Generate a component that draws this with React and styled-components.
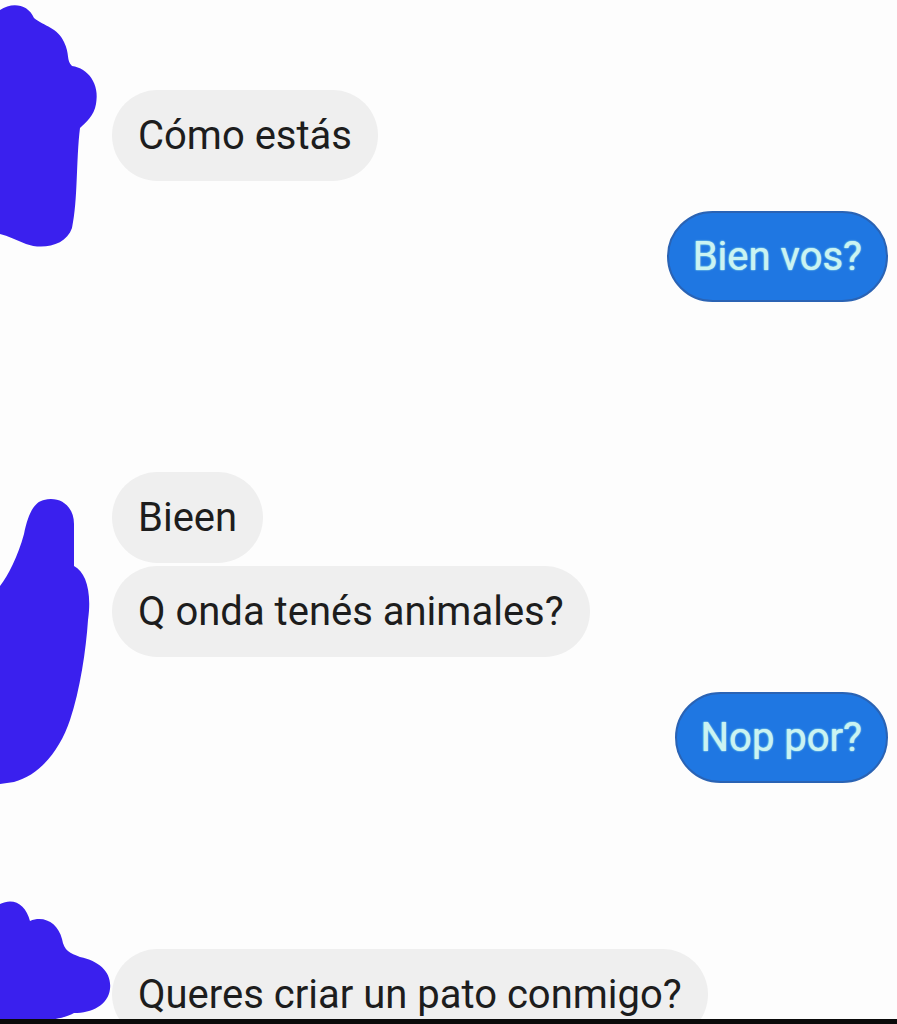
import React from "react";
import styled, { createGlobalStyle } from "styled-components";

const GlobalStyle = createGlobalStyle`
  html, body {
    margin: 0;
    padding: 0;
    background: #fdfdfd;
  }
  * { box-sizing: border-box; }
`;

const Page = styled.div`
  width: 897px;
  height: 1024px;
  display: grid;
  grid-template-rows: 1fr 5px;
  background: #fdfdfd;
  overflow: hidden;
  font-family: Roboto, "Liberation Sans", sans-serif;
`;

const Thread = styled.div`
  display: flex;
  flex-direction: column;
  padding: 90px 9px 0 0;
  overflow: hidden;
`;

const BottomBar = styled.div`
  background: #0a0a0a;
`;

const Group = styled.div`
  position: relative;
  display: flex;
  flex-direction: column;
  align-items: flex-start;
  gap: 3px;
  padding-left: 112px;
  margin-top: ${p => p.top || 0}px;
`;

const SentRow = styled.div`
  display: flex;
  justify-content: flex-end;
  margin-top: ${p => p.top || 0}px;
`;

const Bubble = styled.div`
  height: 91px;
  display: flex;
  align-items: center;
  padding: 0 26px;
  border-radius: 46px;
  background: #efefef;
  color: #1d1d1d;
  font-size: 40px;
  white-space: nowrap;
  flex-shrink: 0;
`;

const SentBubble = styled(Bubble)`
  background: #1f77e2;
  border: 2px solid #2a63b4;
  color: #cbf3f2;
  text-shadow: 0 0 2px #9ae8e8, 0 0 1px #b8f2f2;
  padding: 0 24px;
`;

const Scribble = styled.svg`
  position: absolute;
  left: 0;
  top: ${p => p.top}px;
  overflow: visible;
`;

const INK = "#3a20ee";

const Blob = ({ top, height, y, d }) => (
  <Scribble top={top} width="120" height={height} viewBox={`0 ${y} 120 ${height}`}>
    <path d={d} fill={INK} />
  </Scribble>
);

const App = () => (
  <>
    <GlobalStyle />
    <Page>
      <Thread>
        <Group>
          <Blob
            top={-82}
            y={8}
            height={250}
            d="M0,10 C12,2 28,4 34,18 C44,26 58,28 64,42 C70,54 66,60 72,66 C88,68 100,84 96,104 C94,116 86,122 80,128 C76,160 78,200 72,228 C66,246 42,250 26,244 C16,240 8,236 0,234 Z"
          />
          <Bubble>Cómo estás</Bubble>
        </Group>

        <SentRow top={30}>
          <SentBubble>Bien vos?</SentBubble>
        </SentRow>

        <Group top={170}>
          <Blob
            top={20}
            y={492}
            height={300}
            d="M44,500 C60,496 74,506 74,524 L74,566 C86,572 92,592 88,620 C86,650 80,690 70,720 C60,750 40,775 14,782 L0,784 L0,586 C8,576 18,556 24,534 C28,514 34,502 44,500 Z"
          />
          <Bubble>Bieen</Bubble>
          <Bubble>Q onda tenés animales?</Bubble>
        </Group>

        <SentRow top={35}>
          <SentBubble>Nop por?</SentBubble>
        </SentRow>

        <Group top={166}>
          <Blob
            top={-50}
            y={898}
            height={126}
            d="M0,903 C14,896 26,904 30,920 C44,914 58,922 62,938 C64,950 70,952 80,956 C100,960 112,972 110,988 C108,1004 92,1012 74,1012 C60,1020 30,1022 0,1020 Z"
          />
          <Bubble>Queres criar un pato conmigo?</Bubble>
        </Group>
      </Thread>
      <BottomBar />
    </Page>
  </>
);

export default App;
